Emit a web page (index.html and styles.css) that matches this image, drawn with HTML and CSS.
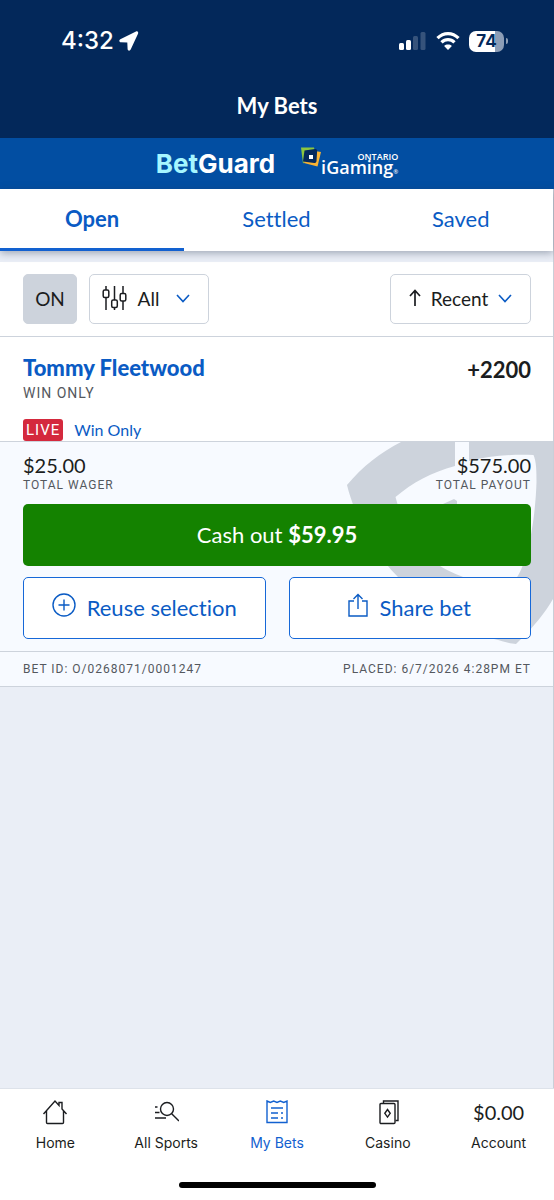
FILE: index.html
```html
<!DOCTYPE html>
<html lang="en">
<head>
<meta charset="utf-8">
<meta name="viewport" content="width=device-width, initial-scale=1">
<title>My Bets</title>
<link rel="stylesheet" href="styles.css">
</head>
<body>
<div class="app">
  <header class="header">
    <div class="status">
      <div class="status-left">
        <span>4:32</span>
        <svg width="20" height="20" viewBox="0 0 20 20" fill="#fff"><path d="M17 .4 1.300 8.200c-1.600.9-1.200 3 .6 3.100l6.400.3.300 6.500c.1 1.800 2.300 2.200 3.100.5L19 2.700C19.700 1.100 18.400-.2 17 .4z"/></svg>
      </div>
      <div class="status-right">
        <svg width="28" height="20" viewBox="0 0 28 20" fill="#fff"><rect x="0" y="12" width="5" height="7" rx="1.500"/><rect x="7" y="9" width="5" height="10" rx="1.500"/><g opacity=".2"><rect x="14" y="5" width="5" height="14" rx="1.500"/><rect x="21.500" y="1" width="5" height="18" rx="1.500"/></g></svg>
        <svg width="24" height="20" viewBox="0 0 24 20"><g fill="none" stroke="#fff" stroke-width="3.200"><path d="M1.500 7.200C7.500 1 16.500 1 22.500 7.200"/><path d="M5.500 11.400c3.700-3.700 9.300-3.700 13 0"/></g><path d="M12 19l-3.900-4c2.200-1.900 5.600-1.900 7.800 0z" fill="#fff"/></svg>
        <div class="battery"><span class="battery-body">74</span><span class="battery-cap"></span></div>
      </div>
    </div>
    <h1 class="title">My Bets</h1>
  </header>
  <div class="brands">
    <div class="betguard"><span>Bet</span>Guard</div>
    <div class="igaming">
      <svg width="20" height="21" viewBox="0 0 20 21"><path d="M0 .5h13l1 4-12 12z" fill="#8cc63f"/><path d="M8 3l12 2-3.500 14.500L3 16z" fill="#f9b233"/><path d="M3.500 3.500 14 2c1.500 0 2 .6 2.100 2L15.500 14c-.1 1.500-1 2-2.300 2L2 14.500z" fill="#04295d"/><rect x="8" y="8" width="4" height="4" fill="#fff"/></svg>
      <div class="igaming-words"><small>ONTARIO</small><b>iGaming<i>®</i></b></div>
    </div>
  </div>
  <main class="main">
    <nav class="tabs">
      <button class="tab tab-active">Open</button>
      <button class="tab">Settled</button>
      <button class="tab">Saved</button>
    </nav>
    <div class="filters">
      <button class="chip chip-on">ON</button>
      <button class="chip chip-all">
        <svg width="26" height="26" viewBox="0 0 26 26" fill="none" stroke="#1b1d20" stroke-width="1.500"><path d="M4 1v4M4 12.500v12.500M12.500 1v14M12.500 22.500v2.500M21 1v7M21 16v9"/><rect x="1.200" y="5" width="5.600" height="7.500" rx="1.500"/><rect x="9.700" y="15" width="5.600" height="7.500" rx="1.500"/><rect x="18.200" y="8.500" width="5.600" height="7.500" rx="1.500"/></svg>
        <span>All</span>
        <svg class="chevron" width="14" height="9" viewBox="0 0 14 9"><path d="M1 1l6 6.500L13 1"/></svg>
      </button>
      <button class="chip chip-recent">
        <svg width="12" height="18" viewBox="0 0 12 18" fill="none" stroke="#1b1d20" stroke-width="1.700"><path d="M6 17V2M1 7l5-5.500L11 7"/></svg>
        <span>Recent</span>
        <svg class="chevron" width="14" height="9" viewBox="0 0 14 9"><path d="M1 1l6 6.500L13 1"/></svg>
      </button>
    </div>
    <article class="bet">
      <div class="bet-top">
        <div>
          <h2 class="player">Tommy Fleetwood</h2>
          <div class="caps caps-lg">WIN ONLY</div>
        </div>
        <div class="odds">+2200</div>
      </div>
      <div class="live-row"><span class="live">LIVE</span><a class="live-link" href="#">Win Only</a></div>
      <div class="stake">
        <svg class="shield" width="207" height="209" viewBox="0 0 207 209" fill="#cdd3dc"><path d="M55 0h54v24C86 30 66 41 49.500 55c7 27 19 49 35 63 12 8 22 13 35 18 24 9 35 12 51 0 12-17 19-61 20-96 0-10 0-20-3-27-22-1-45 1-64.500 6V0H207v157c-8 14-20 28-29 37l-8 8c-6 0-14-3-22-5-45-13-78-31-96-62C28 112 8 72 1 43 16 25 35 10 55 0z"/><path d="M97 62l11-5 3 2v3z"/></svg>
        <div class="amounts">
          <div><div class="money">$25.00</div><div class="caps">TOTAL WAGER</div></div>
          <div class="right"><div class="money">$575.00</div><div class="caps">TOTAL PAYOUT</div></div>
        </div>
        <button class="cashout">Cash out <b>$59.95</b></button>
        <div class="actions">
          <button class="action">
            <svg width="24" height="24" viewBox="0 0 24 24"><circle cx="12" cy="12" r="11"/><path d="M12 6.500v11M6.500 12h11"/></svg>
            Reuse selection
          </button>
          <button class="action">
            <svg width="20" height="24" viewBox="0 0 20 24"><path d="M6 8H1v15h18V8h-5M10 16V2M5.500 6 10 1.500 14.500 6"/></svg>
            Share bet
          </button>
        </div>
      </div>
      <footer class="caps bet-meta"><span>BET ID: O/0268071/0001247</span><span>PLACED: 6/7/2026 4:28PM ET</span></footer>
    </article>
  </main>
  <nav class="bottom">
    <div class="bottom-items">
      <a class="item" href="#"><span class="icon"><svg width="26" height="26" viewBox="0 0 26 26"><path d="M1.500 15 13 2l4 4.500V3.500h3V10l4.500 5M4.500 12v11.500q0 1 1 1h15q1 0 1-1V12"/></svg></span>Home</a>
      <a class="item" href="#"><span class="icon"><svg width="26" height="26" viewBox="0 0 26 26"><circle cx="14" cy="10" r="6.500"/><path d="M18.700 14.700 26 22M2 8h2.500M2 13.500h4.500M2 19h11"/></svg></span>All Sports</a>
      <a class="item item-active" href="#"><span class="icon"><svg width="24" height="26" viewBox="0 0 24 26"><path d="M2 2l3.300 1.500L8.700 2 12 3.500 15.300 2l3.400 1.500L22 2v21.500H2zM6 9h12M6 14h7M6 19h7M16 14h2M16 19h2"/></svg></span>My Bets</a>
      <a class="item" href="#"><span class="icon"><svg width="22" height="26" viewBox="0 0 22 26"><path d="M6.500 4V2H21v19.500h-2.500"/><rect x="3" y="4.500" width="15" height="20" rx="1"/><path d="M10.500 10.500l2.700 3.800-2.700 3.800-2.700-3.800z"/></svg></span>Casino</a>
      <a class="item" href="#"><span class="icon balance">$0.00</span>Account</a>
    </div>
    <div class="home-bar"></div>
  </nav>
</div>
</body>
</html>
```
FILE: styles.css
```css
* { box-sizing: border-box; }

body {
  margin: 0;
  font-family: Lato, sans-serif;
  font-variant-ligatures: none;
  color: #1b1d20;
  background: #eaeef6;
}

button {
  font: inherit;
  font-variant-ligatures: none;
  color: inherit;
  padding: 0;
  border: 0;
  background: none;
}

a { color: inherit; text-decoration: none; }
svg { display: block; flex: none; }

.app { min-height: 100vh; display: flex; flex-direction: column; }

.header { background: #03285a; color: #fff; padding: 24px 0 18px; }
.status {
  display: flex;
  justify-content: space-between;
  align-items: center;
  height: 34px;
  padding: 0 46px 0 61px;
}
.status-left {
  display: flex;
  align-items: center;
  gap: 5px;
  font: 500 24px/34px Inter, sans-serif;
}
.status-right { display: flex; align-items: center; gap: 9px; }
.battery { display: flex; align-items: center; gap: 2px; }
.battery-body {
  width: 35px;
  height: 21px;
  border-radius: 7px;
  background: linear-gradient(90deg, #fff 75%, #8c9db6 75%);
  color: #03285a;
  font: 700 17px/21px Inter, sans-serif;
  text-align: center;
}
.battery-cap { width: 2px; height: 6px; border-radius: 0 2px 2px 0; background: #8c9db6; }
.title { margin: 34px 0 0; text-align: center; font-size: 22px; line-height: 28px; font-weight: 700; }

.brands {
  height: 51px;
  background: #024ea2;
  display: flex;
  align-items: center;
  justify-content: center;
  gap: 26px;
  color: #fff;
}
.betguard { font: 700 26px/30px Inter, sans-serif; }
.betguard span { color: #a5f6ff; }
.igaming { display: flex; align-items: flex-start; }
.igaming-words { display: flex; flex-direction: column; padding-top: 5px; }
.igaming-words small { font: 600 9px/9px "Open Sans", sans-serif; align-self: flex-end; }
.igaming-words b { font: 600 18px/18px "Open Sans", sans-serif; margin-top: -3px; }
.igaming-words i { font-size: 6px; font-style: normal; }

.main { flex: 1; border-right: 1px solid #c9cfd8; }

.tabs {
  position: relative;
  display: grid;
  grid-template-columns: repeat(3, 1fr);
  height: 62px;
  background: #fff;
  box-shadow: 0 2px 8px rgba(40, 55, 80, .4);
}
.tab { color: #0a5bc4; font-size: 22px; line-height: 28px; border-bottom: 3px solid transparent; }
.tab-active { font-weight: 700; border-bottom-color: #1261d0; }

.filters {
  display: flex;
  gap: 12px;
  margin-top: 11px;
  padding: 12px 22px 12px 23px;
  background: #fff;
  border-bottom: 1px solid #cdd3dc;
}
.chip {
  display: flex;
  align-items: center;
  justify-content: center;
  height: 50px;
  padding-bottom: 2px;
  border: 1px solid #cdd3dc;
  border-radius: 5px;
  background: #fff;
  font-size: 19px;
}
.chip-on { width: 54px; background: #cdd3dc; }
.chip-all { width: 120px; gap: 10px; padding-right: 6px; }
.chip-all .chevron { margin-left: 7px; }
.chip-recent { width: 141px; gap: 10px; margin-left: auto; }
.chevron { fill: none; stroke: #0a5bc4; stroke-width: 1.6; }

.bet { background: #fff; }
.bet-top { display: flex; justify-content: space-between; padding: 17px 22px 0 23px; }
.player { margin: 0; color: #0a5bc4; font-size: 22px; line-height: 28px; font-weight: 900; }
.odds { font-size: 22px; line-height: 32px; font-weight: 700; }
.caps { font: 400 12px/16px Roboto, sans-serif; letter-spacing: 1px; color: #54585e; }
.caps-lg { font-size: 14px; line-height: 22px; }
.live-row { display: flex; align-items: center; gap: 11px; padding: 15px 23px 0; }
.live {
  padding: 0 3px;
  border-radius: 3px;
  background: #d4293d;
  color: #fff;
  font: 400 15px/22px Roboto, sans-serif;
  letter-spacing: 1px;
}
.live-link { color: #0a5bc4; font-size: 16px; line-height: 22px; }

.stake {
  position: relative;
  padding: 11px 22px 12px 23px;
  background: #f7faff;
  border-top: 1px solid #cdd3dc;
}
.shield { position: absolute; top: 0; right: 0; }
.amounts { position: relative; display: flex; justify-content: space-between; margin-bottom: 11px; }
.money { font-size: 20px; line-height: 24px; }
.right { text-align: right; }
.cashout {
  position: relative;
  display: block;
  width: 100%;
  height: 62px;
  padding-bottom: 2px;
  border-radius: 5px;
  background: #148200;
  color: #fff;
  font-size: 22px;
}
.actions { position: relative; display: grid; grid-template-columns: 1fr 1fr; gap: 23px; margin-top: 11px; }
.action {
  display: flex;
  align-items: center;
  justify-content: center;
  gap: 11px;
  height: 62px;
  padding-bottom: 2px;
  border: 1px solid #1668d8;
  border-radius: 5px;
  background: #fff;
  color: #0a5bc4;
  font-size: 22px;
}
.action svg { fill: none; stroke: #0a5bc4; stroke-width: 1.4; margin-bottom: 5px; }
.bet-meta {
  display: flex;
  justify-content: space-between;
  padding: 9px 22px 9px 23px;
  background: #f7faff;
  border: solid #cdd3dc;
  border-width: 1px 0;
}

.bottom { background: #fff; border-top: 1px solid #dde2ea; padding: 10px 0 12px; }
.bottom-items { display: grid; grid-template-columns: repeat(5, 1fr); height: 83px; }
.item {
  display: flex;
  flex-direction: column;
  align-items: center;
  gap: 8px;
  font: 400 14px/20px Inter, sans-serif;
}
.item-active { color: #1261d0; }
.icon { height: 26px; display: flex; align-items: center; }
.icon svg { fill: none; stroke: currentColor; stroke-width: 1.4; }
.balance { font: 400 20px/26px Lato, sans-serif; }
.home-bar { width: 197px; height: 6px; margin: 0 auto; border-radius: 3px; background: #000; }
```
